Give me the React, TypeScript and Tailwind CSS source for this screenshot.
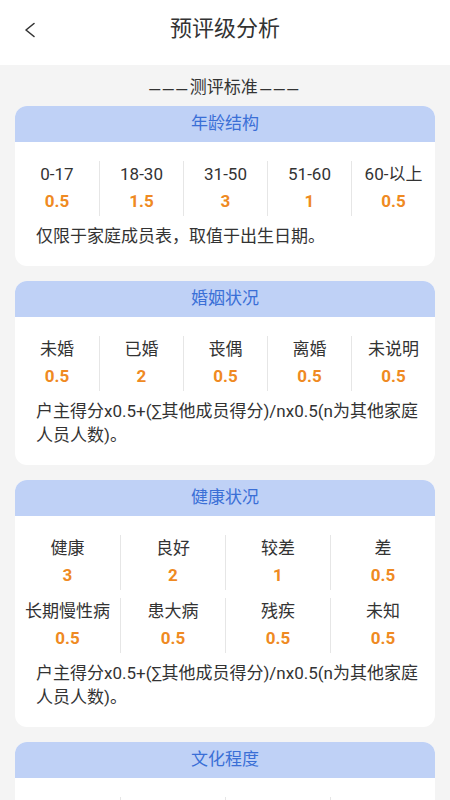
import React from "react";

const font = { fontFamily: 'Roboto, "Noto Sans CJK SC", sans-serif' };

type Item = { label: string; value: string };

function Card({ title, cols, rows, note }: { title: string; cols: 4 | 5; rows: Item[][]; note: string }) {
  return (
    <div className="mx-[15px] mb-[15px] rounded-[12px] bg-white overflow-hidden">
      <div className="h-[36px] bg-[#bfd1f6] flex items-center justify-center text-[17px] text-[#3a6fd6]">{title}</div>
      <div className="pt-[19px] flex flex-col gap-[8px]">
        {rows.map((row, ri) => (
          <div key={ri} className={cols === 5 ? "grid grid-cols-5" : "grid grid-cols-4"}>
            {row.map((it, i) => (
              <div
                key={i}
                className={
                  "h-[55px] flex flex-col items-center " + (i > 0 ? "border-l border-[#e6e6e6]" : "")
                }
              >
                <div className="text-[17px] leading-[24px] text-[#333] mt-[1px] whitespace-nowrap">{it.label}</div>
                <div className="text-[17px] leading-[22px] font-bold text-[#ef8a22] mt-[4px]">{it.value}</div>
              </div>
            ))}
          </div>
        ))}
      </div>
      <div className="pl-[21px] pr-[12px] pt-[8px] pb-[18px] text-[17px] leading-[24px] text-[#333]">{note}</div>
    </div>
  );
}

const formula = "户主得分x0.5+(∑其他成员得分)/nx0.5(n为其他家庭人员人数)。";

function Dashes({ left }: { left?: boolean }) {
  return (
    <span
      className={"text-[11px] leading-[14px] font-bold tracking-[2.5px] mt-[2px] " + (left ? "ml-[2.5px]" : "")}
      style={{ fontFamily: '"Liberation Sans", Arial, sans-serif' }}
    >
      ———
    </span>
  );
}

export default function App() {
  return (
    <div className="w-[450px] h-[800px] overflow-hidden bg-[#f4f4f4]" style={font}>
      <div className="h-[65px] bg-white flex items-center relative">
        <svg className="absolute left-[23px] top-[22px]" width="14" height="16" viewBox="0 0 14 16">
          <path d="M11 1.5 L3 8 L11 14.5" fill="none" stroke="#333" strokeWidth="1.6" strokeLinecap="round" strokeLinejoin="round" />
        </svg>
        <div className="w-full text-center text-[22px] text-[#333] -mt-[9px]">预评级分析</div>
      </div>
      <div className="h-[41px] flex items-center justify-center text-[17px] text-[#333] pt-[4px]">
        <Dashes />
        <span>测评标准</span>
        <Dashes left />
      </div>
      <Card
        title="年龄结构"
        cols={5}
        rows={[[
          { label: "0-17", value: "0.5" },
          { label: "18-30", value: "1.5" },
          { label: "31-50", value: "3" },
          { label: "51-60", value: "1" },
          { label: "60-以上", value: "0.5" },
        ]]}
        note="仅限于家庭成员表，取值于出生日期。"
      />
      <Card
        title="婚姻状况"
        cols={5}
        rows={[[
          { label: "未婚", value: "0.5" },
          { label: "已婚", value: "2" },
          { label: "丧偶", value: "0.5" },
          { label: "离婚", value: "0.5" },
          { label: "未说明", value: "0.5" },
        ]]}
        note={formula}
      />
      <Card
        title="健康状况"
        cols={4}
        rows={[
          [
            { label: "健康", value: "3" },
            { label: "良好", value: "2" },
            { label: "较差", value: "1" },
            { label: "差", value: "0.5" },
          ],
          [
            { label: "长期慢性病", value: "0.5" },
            { label: "患大病", value: "0.5" },
            { label: "残疾", value: "0.5" },
            { label: "未知", value: "0.5" },
          ],
        ]}
        note={formula}
      />
      <Card
        title="文化程度"
        cols={4}
        rows={[[
          { label: "文盲", value: "0.5" },
          { label: "小学", value: "1" },
          { label: "初中", value: "2" },
          { label: "高中", value: "3" },
        ]]}
        note=""
      />
    </div>
  );
}
